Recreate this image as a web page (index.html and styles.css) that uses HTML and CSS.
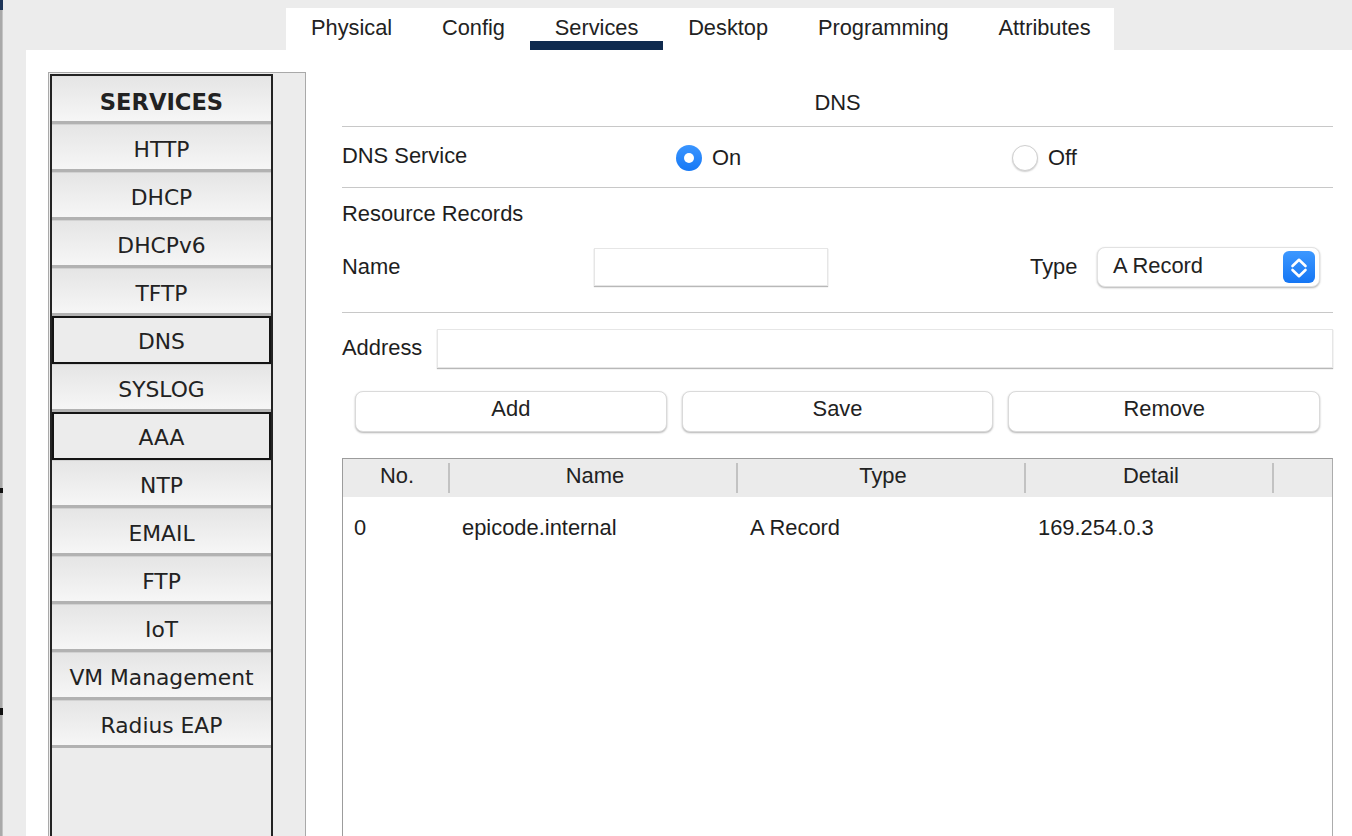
FILE: index.html
```html
<!DOCTYPE html>
<html>
<head>
<meta charset="utf-8">
<title>Services - DNS</title>
<link rel="stylesheet" href="styles.css">
</head>
<body>
<div class="screen">
  <div class="edge">
    <span class="edge-top"></span>
    <span class="edge-mark mark-a"></span>
    <span class="edge-mark mark-b"></span>
  </div>
  <div class="window">
    <div class="tabbar">
      <div class="tabs">
        <div class="tab">Physical</div>
        <div class="tab">Config</div>
        <div class="tab active">Services</div>
        <div class="tab">Desktop</div>
        <div class="tab">Programming</div>
        <div class="tab">Attributes</div>
      </div>
    </div>
    <div class="panel">
      <div class="frame">
        <div class="svc-list">
          <div class="svc head">SERVICES</div>
          <div class="svc">HTTP</div>
          <div class="svc">DHCP</div>
          <div class="svc">DHCPv6</div>
          <div class="svc">TFTP</div>
          <div class="svc sel">DNS</div>
          <div class="svc">SYSLOG</div>
          <div class="svc sel">AAA</div>
          <div class="svc">NTP</div>
          <div class="svc">EMAIL</div>
          <div class="svc">FTP</div>
          <div class="svc">IoT</div>
          <div class="svc">VM Management</div>
          <div class="svc">Radius EAP</div>
        </div>
      </div>
      <div class="main">
        <div class="title">DNS</div>
        <div class="svc-row">
          <span class="lbl">DNS Service</span>
          <label class="radio-opt"><span class="radio on"></span><span>On</span></label>
          <label class="radio-opt"><span class="radio"></span><span>Off</span></label>
        </div>
        <div class="rr">Resource Records</div>
        <div class="name-row">
          <span class="lbl name-lbl">Name</span>
          <div class="input name-input"></div>
          <span class="spacer"></span>
          <span class="lbl type-lbl">Type</span>
          <div class="select">
            <span class="select-text">A Record</span>
            <span class="stepper">
              <svg width="32" height="32" viewBox="0 0 32 32">
                <path d="M9.5 15 L16 8.8 L22.5 15" fill="none" stroke="#fff" stroke-width="2.6" stroke-linecap="round" stroke-linejoin="round"/>
                <path d="M9.5 19 L16 25.2 L22.5 19" fill="none" stroke="#fff" stroke-width="2.6" stroke-linecap="round" stroke-linejoin="round"/>
              </svg>
            </span>
          </div>
        </div>
        <div class="addr-row">
          <span class="lbl addr-lbl">Address</span>
          <div class="input addr-input"></div>
        </div>
        <div class="btn-row">
          <div class="btn">Add</div>
          <div class="btn">Save</div>
          <div class="btn">Remove</div>
        </div>
        <div class="table">
          <div class="thead">
            <div class="th">No.</div>
            <div class="th">Name</div>
            <div class="th">Type</div>
            <div class="th">Detail</div>
            <div class="th last"></div>
          </div>
          <div class="trow">
            <div class="td">0</div>
            <div class="td">epicode.internal</div>
            <div class="td">A Record</div>
            <div class="td">169.254.0.3</div>
            <div class="td"></div>
          </div>
        </div>
      </div>
    </div>
  </div>
</div>
</body>
</html>
```
FILE: styles.css
```css
* { box-sizing: border-box; }
html, body {
  margin: 0;
  padding: 0;
  width: 1352px;
  height: 836px;
  overflow: hidden;
  background: #ececec;
  font-family: "Liberation Sans", Arial, sans-serif;
  color: #1e1e1e;
}
.screen {
  display: flex;
  width: 1352px;
  height: 836px;
  overflow: hidden;
}
.edge {
  width: 3px;
  flex: none;
  display: flex;
  flex-direction: column;
  background: linear-gradient(to right, #a9a9a9 0, #a9a9a9 2px, #c4c4c4 2px);
}
.edge-top { height: 10px; background: #1d3558; }
.edge-mark { width: 3px; background: #111; }
.mark-a { margin-top: 478px; height: 5px; }
.mark-b { margin-top: 215px; height: 7px; }

.window {
  flex: 1;
  display: flex;
  flex-direction: column;
  padding-left: 23px;
}
.tabbar {
  height: 50px;
  flex: none;
  padding: 8px 0 0 260px;
}
.tabs {
  display: flex;
  width: 828px;
  height: 42px;
  background: #fff;
}
.tab {
  height: 42px;
  padding: 8px 24.9px 0;
  border-bottom: 9px solid transparent;
  font-size: 21.8px;
  line-height: 24px;
  color: #222;
}
.tab:first-child { padding-left: 25px; }
.tab.active { border-bottom-color: #0f2a4e; }

.panel {
  flex: none;
  height: 820px;
  background: #fff;
  display: flex;
  padding: 22px 19px 0 22px;
}
.frame {
  width: 258px;
  flex: none;
  border: 1px solid #a9a9a9;
  background: #ececec;
  padding: 1px 0 0 1px;
  display: flex;
  flex-direction: column;
}
.svc-list {
  width: 223px;
  flex: 1;
  border: 2px solid #232323;
  border-bottom: none;
  background: #ececec;
}
.svc {
  height: 48px;
  display: flex;
  align-items: center;
  justify-content: center;
  padding-top: 5px;
  border-top: 1px solid #d2d2d2;
  border-bottom: 3px solid #b2b2b2;
  background: linear-gradient(#e5e5e5, #f6f6f6);
  font-family: "DejaVu Sans", Verdana, sans-serif;
  font-size: 21.8px;
  color: #222;
}
.svc.head { font-weight: bold; font-size: 22.6px; border-top-color: #e2e2e2; }
.svc.sel {
  border: 2px solid #141414;
  background: #ececec;
  padding-top: 3px;
}

.main {
  flex: 1;
  margin-left: 36px;
  display: flex;
  flex-direction: column;
  font-size: 21.9px;
}
.lbl { white-space: nowrap; }
.title {
  height: 55px;
  padding-top: 8px;
  display: flex;
  align-items: center;
  justify-content: center;
  border-bottom: 1px solid #c8c8c8;
}
.svc-row {
  height: 61px;
  display: grid;
  grid-template-columns: 334px 336px 1fr;
  align-items: center;
  border-bottom: 1px solid #c8c8c8;
  padding-bottom: 3px;
}
.radio-opt {
  display: flex;
  align-items: center;
  gap: 10px;
  padding-top: 5px;
}
.radio {
  width: 26px;
  height: 26px;
  border-radius: 50%;
  background: #fff;
  border: 1px solid #cfcfcf;
  box-shadow: 0 1px 1.5px rgba(0,0,0,0.18);
  display: flex;
  align-items: center;
  justify-content: center;
}
.radio.on {
  border: none;
  background: linear-gradient(#3a95ff, #1678f5);
  box-shadow: none;
}
.radio.on::after {
  content: "";
  width: 10px;
  height: 10px;
  border-radius: 50%;
  background: #fff;
}
.rr {
  height: 52px;
  display: flex;
  align-items: center;
}
.name-row {
  height: 73px;
  display: flex;
  align-items: flex-start;
  padding-top: 7px;
  border-bottom: 1px solid #c8c8c8;
}
.name-lbl {
  width: 252px;
  height: 40px;
  display: flex;
  align-items: center;
}
.input {
  background: #fff;
  border: 1px solid #e6e6e6;
  box-shadow: 0 1px 1px rgba(0,0,0,0.28);
}
.name-input {
  width: 234px;
  height: 38px;
  margin-top: 1px;
}
.spacer { width: 202px; }
.type-lbl {
  width: 67px;
  height: 40px;
  display: flex;
  align-items: center;
}
.select {
  width: 223px;
  height: 40px;
  border-radius: 8px;
  background: #fff;
  border: 1px solid #e2e2e2;
  box-shadow: 0 1px 2px rgba(0,0,0,0.3);
  display: flex;
  align-items: center;
  justify-content: space-between;
  padding: 0 4px 0 15px;
}
.select-text { color: #222; padding-bottom: 2px; }
.stepper {
  width: 32px;
  height: 32px;
  border-radius: 6px;
  background: linear-gradient(#3d98ff, #1576f4);
  display: flex;
}
.addr-row {
  display: flex;
  align-items: center;
  padding-top: 16px;
}
.addr-lbl { width: 95px; padding-bottom: 2px; }
.addr-input {
  flex: 1;
  height: 39px;
}
.btn-row {
  display: flex;
  gap: 15px;
  padding: 0 13px;
  margin-top: 23px;
}
.btn {
  flex: 1;
  height: 41px;
  border-radius: 8px;
  background: #fff;
  border: 1px solid #dadada;
  box-shadow: 0 1px 2px rgba(0,0,0,0.3);
  display: flex;
  align-items: center;
  justify-content: center;
  padding-bottom: 6px;
  color: #222;
}
.table {
  margin-top: 26px;
  flex: 1;
  border: 1px solid #9c9c9c;
  border-bottom: none;
  border-right-color: #acacac;
  background: #fff;
}
.thead, .trow {
  display: grid;
  grid-template-columns: 108px 288px 288px 248px 1fr;
}
.thead { background: #ebebeb; height: 38px; }
.th {
  display: flex;
  align-items: center;
  justify-content: center;
  padding-bottom: 4px;
  background: linear-gradient(#c2c2c2, #c2c2c2) right 1px top 4px / 2px 30px no-repeat;
  color: #222;
}
.th.last { background: none; }
.trow { height: 60px; }
.td {
  display: flex;
  align-items: center;
  padding: 2px 0 0 11px;
  color: #1e1e1e;
}
```
